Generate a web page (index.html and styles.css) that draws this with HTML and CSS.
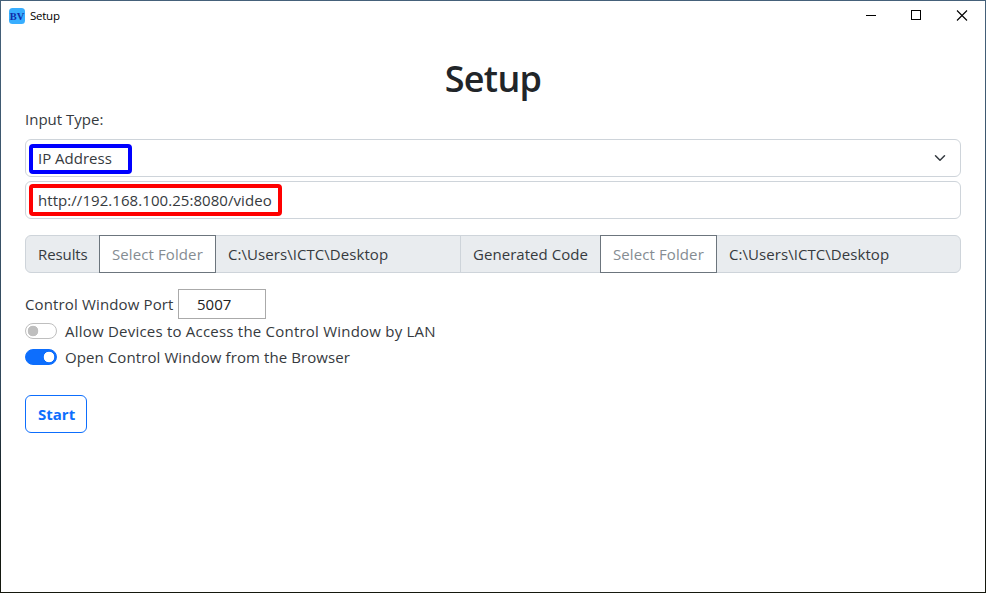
FILE: index.html
```html
<!DOCTYPE html>
<html lang="en">
<head>
<meta charset="utf-8">
<title>Setup</title>
<link rel="stylesheet" href="styles.css">
</head>
<body>
<div class="window">
  <header class="titlebar">
    <svg class="logo" width="16" height="16" viewBox="0 0 16 16"><rect width="16" height="16" rx="3.5" fill="#38aeff"/><text x="8" y="11.5" text-anchor="middle" textLength="14.5" lengthAdjust="spacingAndGlyphs" class="logo-text">BV</text></svg>
    <span class="caption">Setup</span>
    <svg class="controls" width="138" height="30" viewBox="0 0 138 30" fill="none" stroke="#000" stroke-width="1"><path d="M19 14.5h10"/><rect x="64.500" y="9.500" width="9" height="9"/><path stroke-width="1.1" d="M110 9.500l10 10M120 9.500l-10 10"/></svg>
  </header>
  <main>
    <h1>Setup</h1>
    <div class="label"><span class="t-input">Input Type:</span></div>
    <div class="field select">
      <span class="mark blue"></span><span class="t-ip">IP Address</span>
      <svg class="chevron" width="12" height="12" viewBox="0 0 16 16" fill="none" stroke="#343a40" stroke-width="2" stroke-linecap="round" stroke-linejoin="round"><path d="M2 5l6 6 6-6"/></svg>
    </div>
    <div class="field url"><span class="mark red"></span><span class="t-url">http://192.168.100.25:8080/video</span></div>
    <div class="group">
      <div class="cell results"><span class="t-results">Results</span></div>
      <button class="folder"><span class="t-folder">Select Folder</span></button>
      <div class="cell path"><span class="t-path">C:\Users\ICTC\Desktop</span></div>
      <div class="cell code"><span class="t-code">Generated Code</span></div>
      <button class="folder"><span class="t-folder">Select Folder</span></button>
      <div class="cell last"><span class="t-path">C:\Users\ICTC\Desktop</span></div>
    </div>
    <div class="port"><span class="t-port">Control Window Port</span><div class="number"><span class="t-num">5007</span></div></div>
    <div class="check"><i class="switch"></i><span class="t-allow">Allow Devices to Access the Control Window by LAN</span></div>
    <div class="check"><i class="switch on"></i><span class="t-open">Open Control Window from the Browser</span></div>
    <button class="start"><span class="t-start">Start</span></button>
  </main>
</div>
</body>
</html>
```
FILE: styles.css
```css
* { box-sizing: border-box; }
body { margin: 0; background: #fff; color: #363a3e; font: 400 15px/24px "Open Sans", "Noto Sans", sans-serif; }
.window { width: 986px; height: 593px; border: 1px solid; border-image: linear-gradient(#45617a 0%, #30475a 65%, #101818 85%, #15180d 100%) 1; }
.titlebar { display: flex; align-items: center; height: 29px; padding-left: 8px; }
.logo-text { font: bold 11px "Liberation Serif", serif; fill: #102da8; }
.caption { margin-left: 5px; font-size: 11.500px; letter-spacing: -.25px; color: #000; }
.controls { margin-left: auto; }
main { padding: 25px 24px 0; }
h1 { margin: 0; height: 48px; font-size: 36px; line-height: 48px; font-weight: 600; letter-spacing: -.7px; color: #212529; text-align: center; }
span { white-space: nowrap; }
.label { margin-top: 4px; height: 24px; }
.field { position: relative; display: flex; align-items: center; height: 38px; border: 1px solid #ced4da; border-radius: 6px; padding: 0 14px 0 12px; }
.select { margin-top: 8px; }
.url { margin-top: 4px; }
.mark { position: absolute; border: 4px solid; border-radius: 4px; }
.blue { left: 3px; top: 4px; width: 103px; height: 30px; border-color: #00f; }
.red { left: 3px; top: 2px; width: 253px; height: 32px; border-color: #f00; }
.chevron { margin-left: auto; }
.group { display: flex; height: 38px; margin-top: 16px; background: #e9ecef; border: 1px solid #ced4da; border-radius: 6px; }
.cell { display: flex; align-items: center; padding-left: 12px; }
.results { width: 73px; }
.path { width: 244px; }
.code { width: 140px; border-left: 1px solid #ced4da; }
.folder { width: 117px; height: 38px; margin: -1px 0; padding: 0 0 0 12px; text-align: left; font: inherit; background: #fff; border: 1px solid #6c757d; color: #858c92; }
.port { display: flex; align-items: center; height: 30px; margin-top: 16px; }
.port > span { width: 153px; }
.number { width: 88px; height: 30px; border: 1px solid #aaa; padding: 2px 0 0 18px; color: #222; }
.check { display: flex; align-items: center; height: 26px; }
.port + .check { margin-top: -1px; }
.switch { width: 32px; height: 16px; margin-right: 8px; border: 1px solid #bfbfbf; border-radius: 8px; background: radial-gradient(circle at 7px 7px, #bfbfbf 5px, transparent 5.600px); }
.switch.on { border-color: #0d6efd; background: radial-gradient(circle at 23px 7px, #fff 5px, #0d6efd 5.600px); }
.start { display: block; width: 62px; height: 38px; margin-top: 25px; padding: 0 0 0 12px; text-align: left; background: #fff; border: 1px solid #0d6efd; border-radius: 6px; color: #0d6efd; font: bold 15px/24px "Open Sans", sans-serif; }
.t-url, .t-path { letter-spacing: .06px; }
.t-results { letter-spacing: -.1px; }
.t-folder { letter-spacing: .1px; }
.t-code { letter-spacing: .05px; }
.t-port { letter-spacing: .14px; }
.t-allow { letter-spacing: .22px; }
.t-open { letter-spacing: .09px; }
```
